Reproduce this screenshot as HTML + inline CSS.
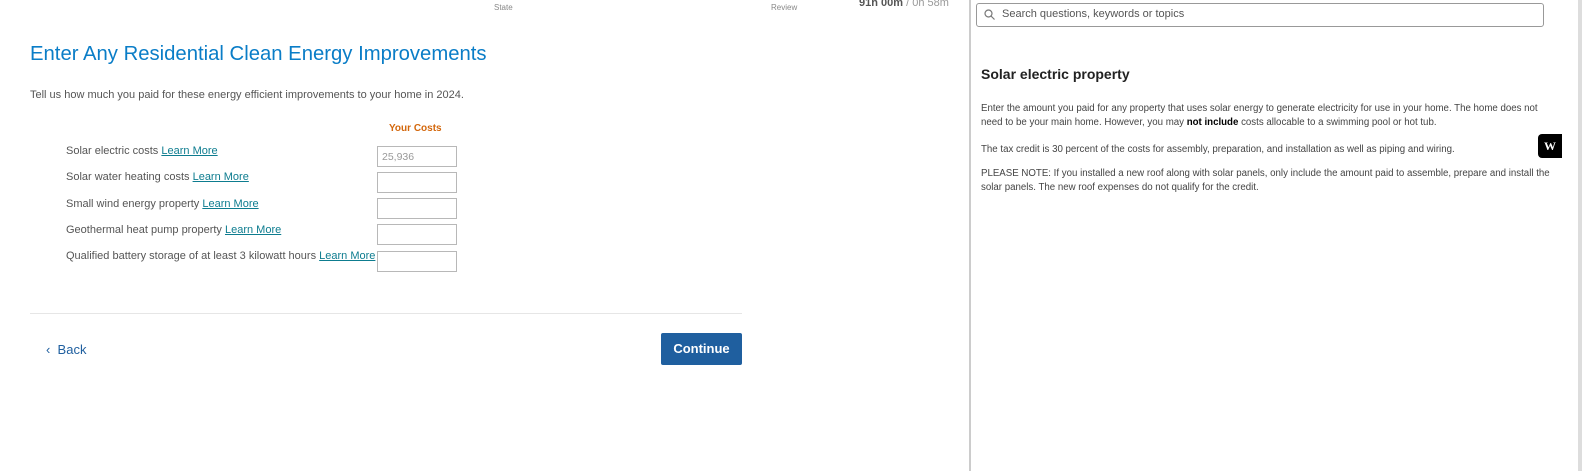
<!DOCTYPE html>
<html><head><style>
*{margin:0;padding:0;box-sizing:border-box}
body{width:1585px;height:471px;overflow:hidden;background:#fff;font-family:"Liberation Sans",sans-serif;color:#393a3d;position:relative}
.a{position:absolute;white-space:nowrap}
.lm{color:#0d7c8f;text-decoration:underline}
.in{position:absolute;left:377px;width:80px;height:21px;border:1px solid #b8b8b8;background:#fff}
.lbl{position:absolute;left:66px;font-size:11px;color:#555}
.rp{font-size:9.7px;line-height:14px;color:#444}
</style></head><body>
<div class="a" style="left:494px;top:3px;font-size:8px;color:#888">State</div>
<div class="a" style="left:771px;top:3px;font-size:8px;color:#888">Review</div>
<div class="a" style="left:859px;top:-3px;font-size:11px;color:#555"><b>91h 00m</b><span style="color:#999"> / 0h 58m</span></div>
<div class="a" style="left:30px;top:43px;font-size:20.3px;color:#0a7dc7">Enter Any Residential Clean Energy Improvements</div>
<div class="a" style="left:30px;top:89px;font-size:11px;color:#555">Tell us how much you paid for these energy efficient improvements to your home in 2024.</div>
<div class="a" style="left:389px;top:123px;font-size:10px;color:#d3670c;font-weight:bold">Your Costs</div>
<div class="lbl" style="top:145px">Solar electric costs <span class="lm">Learn More</span></div>
<div class="in" style="top:146px"><span style="font-size:10.5px;color:#999;position:absolute;left:4px;top:4px">25,936</span></div>
<div class="lbl" style="top:171px">Solar water heating costs <span class="lm">Learn More</span></div>
<div class="in" style="top:172px"></div>
<div class="lbl" style="top:198px">Small wind energy property <span class="lm">Learn More</span></div>
<div class="in" style="top:198px"></div>
<div class="lbl" style="top:224px">Geothermal heat pump property <span class="lm">Learn More</span></div>
<div class="in" style="top:224px"></div>
<div class="lbl" style="top:250px">Qualified battery storage of at least 3 kilowatt hours <span class="lm">Learn More</span></div>
<div class="in" style="top:251px"></div>
<div class="a" style="left:30px;top:313px;width:712px;height:1px;background:#e6e6e6"></div>
<div class="a" style="left:46px;top:342px;font-size:13px;color:#1f5f9f">&#8249;&nbsp;&nbsp;Back</div>
<div class="a" style="left:661px;top:333px;width:81px;height:32px;background:#1f5f9f;border-radius:2px;color:#fff;font-size:13px;font-weight:bold;text-align:center;line-height:32px">Continue</div>
<div class="a" style="left:969px;top:0;width:2px;height:471px;background:#ccc"></div>
<div class="a" style="left:1578px;top:0;width:4px;height:471px;background:#ddd"></div>
<div class="a" style="left:976px;top:3px;width:568px;height:24px;border:1px solid #999;border-radius:3px"></div>
<svg class="a" style="left:984px;top:9px" width="11" height="11" viewBox="0 0 11 11"><circle cx="4.5" cy="4.5" r="3.5" fill="none" stroke="#777" stroke-width="1.2"/><path d="M7 7l3.5 3.5" stroke="#777" stroke-width="1.2"/></svg>
<div class="a" style="left:1002px;top:8px;font-size:11px;color:#555">Search questions, keywords or topics</div>
<div class="a" style="left:981px;top:66px;font-size:14px;font-weight:bold;color:#222">Solar electric property</div>
<div class="a rp" style="left:981px;top:102px">Enter the amount you paid for any property that uses solar energy to generate electricity for use in your home. The home does not<br>need to be your main home. However, you may <b style="color:#000">not include</b> costs allocable to a swimming pool or hot tub.</div>
<div class="a rp" style="left:981px;top:143px">The tax credit is 30 percent of the costs for assembly, preparation, and installation as well as piping and wiring.</div>
<div class="a rp" style="left:981px;top:167px">PLEASE NOTE: If you installed a new roof along with solar panels, only include the amount paid to assemble, prepare and install the<br>solar panels. The new roof expenses do not qualify for the credit.</div>
<div class="a" style="left:1538px;top:134px;width:24px;height:24px;background:#000;border-radius:4px 0 0 4px;color:#fff;font-family:'Liberation Serif',serif;font-weight:bold;font-size:12px;text-align:center;line-height:24px">W</div>
</body></html>
